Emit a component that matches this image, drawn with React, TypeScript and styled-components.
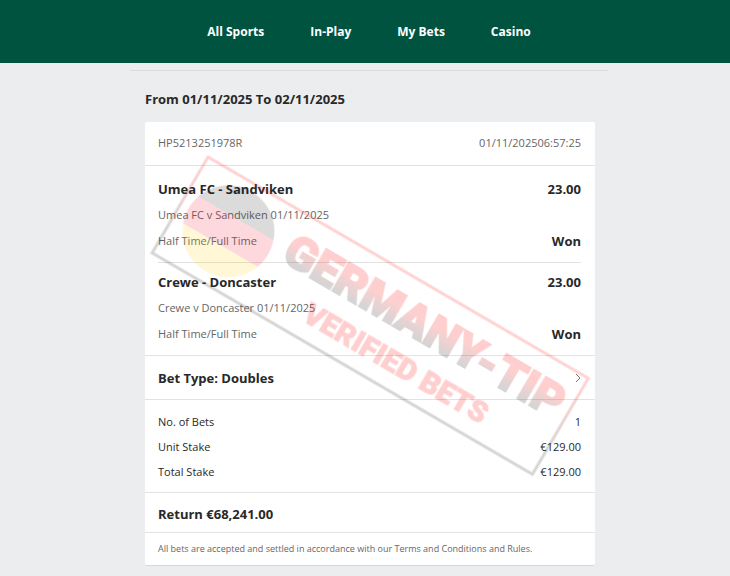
import React from "react";
import styled, { createGlobalStyle } from "styled-components";

const GlobalStyle = createGlobalStyle`
  *, *::before, *::after { box-sizing: border-box; }
  body {
    margin: 0;
    background: #ebedee;
    color: #282828;
    font-family: "Open Sans", "Noto Sans", sans-serif;
    font-size: 11px;
    line-height: 16px;
  }
  h1, h2, h3, p, dl, dd { margin: 0; }
`;

const Header = styled.header`
  background: #00543f;
  padding: 0 0 0 8px;
`;

const Nav = styled.nav`
  display: flex;
  justify-content: center;
  gap: 46px;
  padding: 24px 0 23px;
`;

const NavLink = styled.a`
  color: #fff;
  font-size: 12px;
  font-weight: 700;
  text-decoration: none;
`;

const Main = styled.main`
  max-width: 486px;
  margin: 0 auto;
  padding: 7px 0 10px 8px;
`;

const Content = styled.div`
  border-top: 1px solid #d9dbdd;
  padding: 18px 13px 0 15px;
`;

const Heading = styled.h1`
  font-size: 13px;
  line-height: 20px;
  font-weight: 700;
`;

const Card = styled.article`
  position: relative;
  margin-top: 13px;
  background: #fff;
  border-bottom: 1px solid #d4d8d8;
  border-radius: 2px;
`;

const Section = styled.section<{ $pad: string }>`
  padding: ${(p) => p.$pad};
  & + & { border-top: 1px solid #e1e2e2; }
`;

const Row = styled.div`
  display: flex;
  justify-content: space-between;
  align-items: center;
`;

const Muted = styled.span`
  color: #666;
`;

const Stamp = styled.time`
  color: #666;
`;

const Selection = styled.div`
  display: grid;
  gap: 9px;
  padding: 14px 0 12px;
  & + & { border-top: 1px solid #e1e2e2; padding: 10px 0 12px; }
`;

const Strong = styled.h2`
  font-size: 13px;
  line-height: 18px;
  font-weight: 700;
`;

const Value = styled.strong`
  font-size: 13px;
  line-height: 18px;
`;

const BetTypeButton = styled.button`
  display: flex;
  width: 100%;
  justify-content: space-between;
  align-items: center;
  border: 0;
  padding: 0;
  background: none;
  color: inherit;
  font: 700 13px/18px "Open Sans", "Noto Sans", sans-serif;
  cursor: pointer;
`;

const Chevron = styled.svg`
  width: 6px;
  height: 10px;
`;

const Stakes = styled.dl`
  display: grid;
  gap: 9px;
`;

const Terms = styled.p`
  color: #666;
  font-size: 9px;
`;

const Watermark = styled.svg`
  position: absolute;
  top: 0;
  left: 0;
  width: 450px;
  height: 360px;
  pointer-events: none;
`;

const selections = [
  { name: "Umea FC - Sandviken", event: "Umea FC v Sandviken 01/11/2025" },
  { name: "Crewe - Doncaster", event: "Crewe v Doncaster 01/11/2025" },
];

const stakes = [
  ["No. of Bets", "1"],
  ["Unit Stake", "€129.00"],
  ["Total Stake", "€129.00"],
];

function VerifiedStamp() {
  return (
    <Watermark viewBox="0 0 450 360" aria-hidden="true">
      <defs>
        <linearGradient id="frame" gradientUnits="userSpaceOnUse" x1="0" y1="0" x2="0" y2="111">
          <stop offset="0.1" stopColor="#ff2020" />
          <stop offset="0.75" stopColor="#303030" />
        </linearGradient>
        <linearGradient id="letters" gradientUnits="userSpaceOnUse" x1="0" y1="16" x2="0" y2="54">
          <stop offset="0.4" stopColor="#ff1818" />
          <stop offset="0.95" stopColor="#303030" />
        </linearGradient>
        <clipPath id="disc">
          <circle cx="55" cy="54" r="46" />
        </clipPath>
        <filter id="soft" x="-5%" y="-5%" width="110%" height="110%">
          <feGaussianBlur stdDeviation="0.7" />
        </filter>
      </defs>
      <g transform="translate(63 35) rotate(30.2)" opacity="0.2" filter="url(#soft)">
        <rect x="0" y="0" width="440" height="111" fill="none" stroke="url(#frame)" strokeWidth="3" />
        <g clipPath="url(#disc)" opacity="0.8">
          <rect x="5" y="5" width="100" height="34" fill="#202020" />
          <rect x="5" y="39" width="100" height="31" fill="#f01030" />
          <rect x="5" y="70" width="100" height="34" fill="#ffd000" />
        </g>
        <g fontFamily="Roboto, sans-serif" fontWeight="900" strokeLinejoin="miter">
          <text x="114" y="53" fontSize="47" fill="url(#letters)" stroke="url(#letters)" strokeWidth="2">GERMANY-TIP</text>
          <text x="162" y="94" fontSize="30" fill="#ff1818" stroke="#ff1818" strokeWidth="1">VERIFIED BETS</text>
        </g>
      </g>
    </Watermark>
  );
}

export default function App() {
  return (
    <>
      <GlobalStyle />
      <Header>
        <Nav>
          {["All Sports", "In-Play", "My Bets", "Casino"].map((item) => (
            <NavLink key={item} href="#">{item}</NavLink>
          ))}
        </Nav>
      </Header>
      <Main>
        <Content>
          <Heading>From 01/11/2025 To 02/11/2025</Heading>
          <Card>
            <Section $pad="13px 14px 14px 13px">
              <Row>
                <Muted>HP5213251978R</Muted>
                <Stamp>01/11/202506:57:25</Stamp>
              </Row>
            </Section>
            <Section $pad="0 14px 0 13px">
              {selections.map((s) => (
                <Selection key={s.name}>
                  <Row>
                    <Strong>{s.name}</Strong>
                    <Value>23.00</Value>
                  </Row>
                  <Muted>{s.event}</Muted>
                  <Row>
                    <Muted>Half Time/Full Time</Muted>
                    <Value>Won</Value>
                  </Row>
                </Selection>
              ))}
            </Section>
            <Section $pad="13px 14px 12px 13px">
              <BetTypeButton type="button">
                Bet Type: Doubles
                <Chevron viewBox="0 0 6 10" aria-hidden="true">
                  <path d="M1 1L5 5L1 9" fill="none" stroke="#777" />
                </Chevron>
              </BetTypeButton>
            </Section>
            <Section $pad="14px 14px 12px 13px">
              <Stakes>
                {stakes.map(([label, value]) => (
                  <Row key={label}>
                    <dt>{label}</dt>
                    <dd>{value}</dd>
                  </Row>
                ))}
              </Stakes>
            </Section>
            <Section $pad="12px 14px 9px 13px">
              <Strong>Return €68,241.00</Strong>
            </Section>
            <Section $pad="8px 14px 8px 13px">
              <Terms>All bets are accepted and settled in accordance with our Terms and Conditions and Rules.</Terms>
            </Section>
            <VerifiedStamp />
          </Card>
        </Content>
      </Main>
    </>
  );
}
